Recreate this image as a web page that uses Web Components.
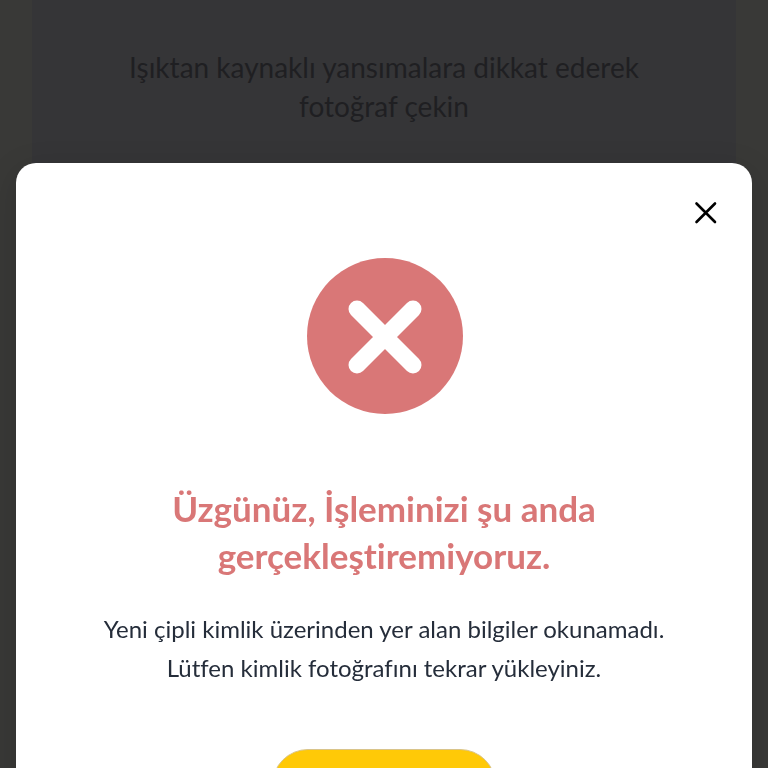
<!DOCTYPE html>
<html lang="tr">
<head>
  <meta charset="utf-8">
  <meta name="viewport" content="width=device-width, initial-scale=1">
  <title>Kimlik Doğrulama</title>
  <style>
    body {
      margin: 0;
      background: #393937;
      font-family: Lato, "Open Sans", sans-serif;
      font-variant-ligatures: none;
    }
  </style>
</head>
<body>
  <photo-tip>Işıktan kaynaklı yansımalara dikkat ederek fotoğraf çekin</photo-tip>

  <error-dialog>
    <status-icon slot="icon"></status-icon>
    <span slot="title">Üzgünüz, İşleminizi şu anda<br>gerçekleştiremiyoruz.</span>
    <span slot="message">Yeni çipli kimlik üzerinden yer alan bilgiler okunamadı.<br>Lütfen kimlik fotoğrafını tekrar yükleyiniz.</span>
    <pill-button slot="action" label="Tekrar yükle"></pill-button>
  </error-dialog>

  <script>
    class PhotoTip extends HTMLElement {
      constructor() {
        super();
        this.attachShadow({ mode: 'open' });
      }

      connectedCallback() {
        this.shadowRoot.innerHTML = `
          <style>
            :host {
              display: block;
              margin: 0 32px;
              padding: 48px 80px 120px;
              background: #353537;
              color: #1f1f22;
              font-size: 28px;
              line-height: 39px;
              text-align: center;
            }
            p {
              margin: 0;
            }
          </style>
          <p><slot></slot></p>
        `;
      }
    }

    class StatusIcon extends HTMLElement {
      constructor() {
        super();
        this.attachShadow({ mode: 'open' });
      }

      connectedCallback() {
        this.shadowRoot.innerHTML = `
          <style>
            :host {
              display: block;
              width: 158px;
              height: 158px;
            }
            svg {
              display: block;
              width: 100%;
              height: 100%;
            }
          </style>
          <svg viewBox="0 0 158 158" aria-hidden="true">
            <circle cx="80" cy="79" r="78" fill="#d97777"/>
            <path d="M52 52l56 56M108 52l-56 56" stroke="#fff" stroke-width="17" stroke-linecap="round"/>
          </svg>
        `;
      }
    }

    class PillButton extends HTMLElement {
      constructor() {
        super();
        this.attachShadow({ mode: 'open' });
      }

      connectedCallback() {
        const label = this.getAttribute('label') || '';

        this.shadowRoot.innerHTML = `
          <style>
            :host {
              display: block;
            }
            button {
              display: block;
              width: 224px;
              height: 72px;
              border: 1px solid #d9c48a;
              border-radius: 36px;
              background: #ffc907;
              cursor: pointer;
            }
          </style>
          <button type="button" aria-label="${label}"></button>
        `;
      }
    }

    class ErrorDialog extends HTMLElement {
      constructor() {
        super();
        this.attachShadow({ mode: 'open' });
      }

      connectedCallback() {
        this.shadowRoot.innerHTML = `
          <style>
            :host {
              position: fixed;
              inset: 0;
              display: block;
              overflow-y: auto;
              scrollbar-width: none;
            }
            section {
              display: flex;
              flex-direction: column;
              align-items: center;
              margin: 163px 16px 0;
              padding: 32px;
              border-radius: 20px;
              background: #fff;
              box-shadow: 0 8px 32px rgba(0, 0, 0, 0.15);
              text-align: center;
            }
            .close {
              align-self: flex-end;
              width: 30px;
              height: 36px;
              padding: 0;
              border: none;
              background: none;
              cursor: pointer;
            }
            .close svg {
              display: block;
              width: 30px;
              height: 36px;
            }
            .icon {
              margin-top: 26px;
            }
            h1 {
              margin: 70px 0 0;
              color: #d97777;
              font-size: 35px;
              font-weight: 700;
              line-height: 47px;
            }
            p {
              margin: 30px 0 62px;
              color: #252d3a;
              font-size: 24px;
              line-height: 39px;
            }
          </style>
          <section role="dialog" aria-modal="true" aria-labelledby="title">
            <button class="close" type="button" aria-label="Kapat">
              <svg viewBox="0 0 30 36" fill="none" stroke="#000" stroke-width="2.6" stroke-linecap="round">
                <path d="M6.500 8.500l18.500 18.500M25 8.500L6.500 27"/>
              </svg>
            </button>
            <div class="icon"><slot name="icon"></slot></div>
            <h1 id="title"><slot name="title"></slot></h1>
            <p><slot name="message"></slot></p>
            <slot name="action"></slot>
          </section>
        `;

        this.shadowRoot.querySelector('.close').addEventListener('click', () => this.remove());
      }
    }

    customElements.define('photo-tip', PhotoTip);
    customElements.define('status-icon', StatusIcon);
    customElements.define('pill-button', PillButton);
    customElements.define('error-dialog', ErrorDialog);
  </script>
</body>
</html>
